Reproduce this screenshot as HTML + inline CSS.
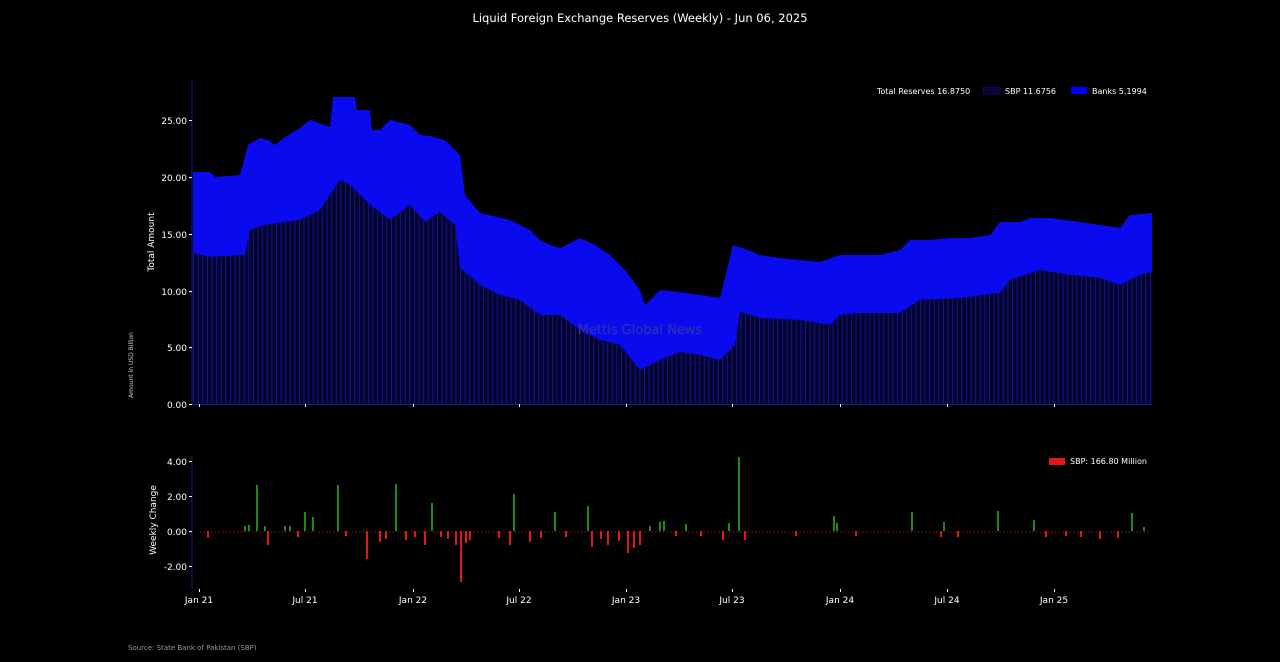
<!DOCTYPE html>
<html><head><meta charset="utf-8"><style>
html,body{margin:0;padding:0;background:#000;width:1280px;height:662px;overflow:hidden}
svg text{font-family:"DejaVu Sans","Liberation Sans",sans-serif}
</style></head><body>
<svg width="1280" height="662" viewBox="0 0 1280 662" xmlns="http://www.w3.org/2000/svg">
<defs>
<pattern id="st" width="4.6" height="10" patternUnits="userSpaceOnUse">
<rect x="0" y="0" width="0.9" height="10" fill="#1a1ab4" opacity="0.8"/>
</pattern>
</defs>
<rect width="1280" height="662" fill="#000"/>
<text x="640" y="22" fill="#fff" font-size="11.5" text-anchor="middle">Liquid Foreign Exchange Reserves (Weekly) - Jun 06, 2025</text>

<polygon fill="#0a0aee" points="193,172 210,172 215,177 240,175 248,145 260,138 268,140 275,145 285,137 300,128 310,120 330,127 333,97 355,97 357,110 370,110 372,130 380,130 390,120 410,125 420,135 430,136 445,140 460,155 465,195 480,213 510,220 520,225 530,230 540,240 550,245 560,248 580,238 595,245 610,255 625,270 640,290 645,305 660,290 680,292 700,295 720,298 733,245 748,250 760,255 780,258 800,260 820,262 840,255 860,255 880,255 900,250 910,240 930,240 950,238 970,238 990,235 1000,222 1020,222 1030,218 1050,218 1080,222 1100,225 1120,228 1130,215 1152,213 1152,272 1140,275 1120,285 1100,278 1070,275 1040,270 1010,280 1000,293 960,298 920,300 900,313 860,313 840,315 830,325 800,320 760,318 740,312 735,345 720,360 700,355 680,352 660,360 640,370 620,345 600,340 580,330 560,315 540,315 520,300 500,295 480,285 460,268 455,225 440,212 425,222 410,205 390,220 370,205 350,185 340,180 320,210 300,220 265,225 250,230 245,255 210,257 193,253"/>
<path fill="#03032c" d="M193,404 L193,253 210,257 245,255 250,230 265,225 300,220 320,210 340,180 350,185 370,205 390,220 410,205 425,222 440,212 455,225 460,268 480,285 500,295 520,300 540,315 560,315 580,330 600,340 620,345 640,370 660,360 680,352 700,355 720,360 735,345 740,312 760,318 800,320 830,325 840,315 860,313 900,313 920,300 960,298 1000,293 1010,280 1040,270 1070,275 1100,278 1120,285 1140,275 1152,272 L1152,404 Z"/>
<path fill="url(#st)" d="M193,404 L193,253 210,257 245,255 250,230 265,225 300,220 320,210 340,180 350,185 370,205 390,220 410,205 425,222 440,212 455,225 460,268 480,285 500,295 520,300 540,315 560,315 580,330 600,340 620,345 640,370 660,360 680,352 700,355 720,360 735,345 740,312 760,318 800,320 830,325 840,315 860,313 900,313 920,300 960,298 1000,293 1010,280 1040,270 1070,275 1100,278 1120,285 1140,275 1152,272 L1152,404 Z"/>

<text x="640" y="334" fill="#3636a8" font-size="13" text-anchor="middle">Mettis Global News</text>

<line x1="192" y1="80" x2="192" y2="405" stroke="#1c1c8a" stroke-width="1"/>
<line x1="192" y1="404.5" x2="1152" y2="404.5" stroke="#1c1c8a" stroke-width="1"/>
<g fill="#fff" font-size="9" text-anchor="end">
<text x="187" y="124">25.00</text><text x="187" y="181">20.00</text><text x="187" y="238">15.00</text>
<text x="187" y="295">10.00</text><text x="187" y="351">5.00</text><text x="187" y="408">0.00</text>
</g>
<g stroke="#fff" stroke-width="1">
<line x1="189" y1="120.5" x2="192" y2="120.5"/><line x1="189" y1="177.5" x2="192" y2="177.5"/><line x1="189" y1="234.5" x2="192" y2="234.5"/>
<line x1="189" y1="291.5" x2="192" y2="291.5"/><line x1="189" y1="347.5" x2="192" y2="347.5"/><line x1="189" y1="404.5" x2="192" y2="404.5"/>
<line x1="199.5" y1="404" x2="199.5" y2="407"/><line x1="305.5" y1="404" x2="305.5" y2="407"/><line x1="413.5" y1="404" x2="413.5" y2="407"/>
<line x1="519.5" y1="404" x2="519.5" y2="407"/><line x1="626.5" y1="404" x2="626.5" y2="407"/><line x1="732.5" y1="404" x2="732.5" y2="407"/>
<line x1="840.5" y1="404" x2="840.5" y2="407"/><line x1="947.5" y1="404" x2="947.5" y2="407"/><line x1="1054.5" y1="404" x2="1054.5" y2="407"/>
</g>
<text transform="translate(154,242) rotate(-90)" fill="#fff" font-size="9" text-anchor="middle">Total Amount</text>
<text transform="translate(133,365) rotate(-90)" fill="#ccc" font-size="6" text-anchor="middle">Amount in USD Billion</text>

<text x="877" y="94" fill="#fff" font-size="8">Total Reserves 16.8750</text>
<rect x="983" y="87" width="17" height="7" fill="#05053a" stroke="#1a1a70" stroke-width="0.5"/>
<text x="1005" y="94" fill="#fff" font-size="8">SBP 11.6756</text>
<rect x="1071" y="87" width="16" height="7" fill="#0000ff"/>
<text x="1092" y="94" fill="#fff" font-size="8">Banks 5.1994</text>

<line x1="192" y1="455" x2="192" y2="588" stroke="#1c1c8a" stroke-width="1"/>
<g fill="#fff" font-size="9" text-anchor="end">
<text x="187" y="465">4.00</text><text x="187" y="500">2.00</text><text x="187" y="535">0.00</text><text x="187" y="570">-2.00</text>
</g>
<g stroke="#fff" stroke-width="1">
<line x1="189" y1="461.5" x2="192" y2="461.5"/><line x1="189" y1="496.5" x2="192" y2="496.5"/><line x1="189" y1="531.5" x2="192" y2="531.5"/><line x1="189" y1="566.5" x2="192" y2="566.5"/>
<line x1="199.5" y1="589" x2="199.5" y2="592"/><line x1="305.5" y1="589" x2="305.5" y2="592"/><line x1="413.5" y1="589" x2="413.5" y2="592"/>
<line x1="519.5" y1="589" x2="519.5" y2="592"/><line x1="626.5" y1="589" x2="626.5" y2="592"/><line x1="732.5" y1="589" x2="732.5" y2="592"/>
<line x1="840.5" y1="589" x2="840.5" y2="592"/><line x1="947.5" y1="589" x2="947.5" y2="592"/><line x1="1054.5" y1="589" x2="1054.5" y2="592"/>
</g>
<text transform="translate(156,520) rotate(-90)" fill="#fff" font-size="9" text-anchor="middle">Weekly Change</text>
<g fill="#fff" font-size="9" text-anchor="middle">
<text x="199" y="603">Jan 21</text><text x="305" y="603">Jul 21</text><text x="413" y="603">Jan 22</text>
<text x="519" y="603">Jul 22</text><text x="626" y="603">Jan 23</text><text x="732" y="603">Jul 23</text>
<text x="840" y="603">Jan 24</text><text x="947" y="603">Jul 24</text><text x="1054" y="603">Jan 25</text>
</g>

<line x1="200" y1="532" x2="1150" y2="532" stroke="#6a1010" stroke-width="1.5" stroke-dasharray="1.5,2.2"/>
<g fill="#1e8a1e">
<rect x="256" y="485" width="2" height="46"/><rect x="304" y="512" width="2" height="19"/><rect x="312" y="517" width="2" height="14"/>
<rect x="337" y="485" width="2" height="46"/><rect x="395" y="484" width="2" height="47"/><rect x="431" y="503" width="2" height="28"/>
<rect x="513" y="494" width="2" height="37"/><rect x="554" y="512" width="2" height="19"/><rect x="587" y="506" width="2" height="25"/>
<rect x="738" y="457" width="2" height="74"/><rect x="833" y="516" width="2" height="15"/><rect x="911" y="512" width="2" height="19"/>
<rect x="943" y="522" width="2" height="9"/><rect x="997" y="511" width="2" height="20"/><rect x="1033" y="520" width="2" height="11"/>
<rect x="1131" y="513" width="2" height="18"/><rect x="244" y="526" width="2" height="5"/><rect x="248" y="525" width="2" height="6"/>
<rect x="284" y="526" width="2" height="5"/><rect x="289" y="526" width="2" height="5"/><rect x="264" y="526" width="2" height="5"/>
<rect x="659" y="522" width="2" height="9"/><rect x="663" y="521" width="2" height="10"/><rect x="685" y="524" width="2" height="7"/>
<rect x="836" y="523" width="2" height="8"/><rect x="728" y="523" width="2" height="8"/><rect x="649" y="526" width="2" height="5"/>
<rect x="1143" y="527" width="2" height="4"/>
</g>
<g fill="#e01818">
<rect x="207" y="531" width="2" height="7"/><rect x="267" y="531" width="2" height="14"/><rect x="366" y="531" width="2" height="28"/>
<rect x="379" y="531" width="2" height="11"/><rect x="405" y="531" width="2" height="9"/><rect x="424" y="531" width="2" height="14"/>
<rect x="460" y="531" width="2" height="51"/><rect x="455" y="531" width="2" height="14"/><rect x="469" y="531" width="2" height="9"/>
<rect x="509" y="531" width="2" height="14"/><rect x="529" y="531" width="2" height="11"/><rect x="591" y="531" width="2" height="16"/>
<rect x="627" y="531" width="2" height="22"/><rect x="607" y="531" width="2" height="14"/><rect x="639" y="531" width="2" height="14"/>
<rect x="722" y="531" width="2" height="9"/><rect x="744" y="531" width="2" height="9"/><rect x="1099" y="531" width="2" height="8"/>
<rect x="1117" y="531" width="2" height="7"/><rect x="297" y="531" width="2" height="6"/><rect x="345" y="531" width="2" height="5"/>
<rect x="385" y="531" width="2" height="8"/><rect x="414" y="531" width="2" height="6"/><rect x="440" y="531" width="2" height="6"/>
<rect x="447" y="531" width="2" height="8"/><rect x="465" y="531" width="2" height="12"/><rect x="498" y="531" width="2" height="7"/>
<rect x="540" y="531" width="2" height="7"/><rect x="565" y="531" width="2" height="6"/><rect x="600" y="531" width="2" height="8"/>
<rect x="618" y="531" width="2" height="10"/><rect x="633" y="531" width="2" height="17"/><rect x="675" y="531" width="2" height="5"/>
<rect x="700" y="531" width="2" height="5"/><rect x="795" y="531" width="2" height="5"/><rect x="855" y="531" width="2" height="5"/>
<rect x="940" y="531" width="2" height="6"/><rect x="957" y="531" width="2" height="6"/><rect x="1045" y="531" width="2" height="6"/>
<rect x="1065" y="531" width="2" height="5"/><rect x="1080" y="531" width="2" height="6"/>
</g>

<rect x="1049" y="458" width="16" height="7" fill="#e01818"/>
<text x="1070" y="464" fill="#fff" font-size="8">SBP: 166.80 Million</text>

<text x="128" y="650" fill="#999" font-size="7">Source: State Bank of Pakistan (SBP)</text>
</svg>
</body></html>
